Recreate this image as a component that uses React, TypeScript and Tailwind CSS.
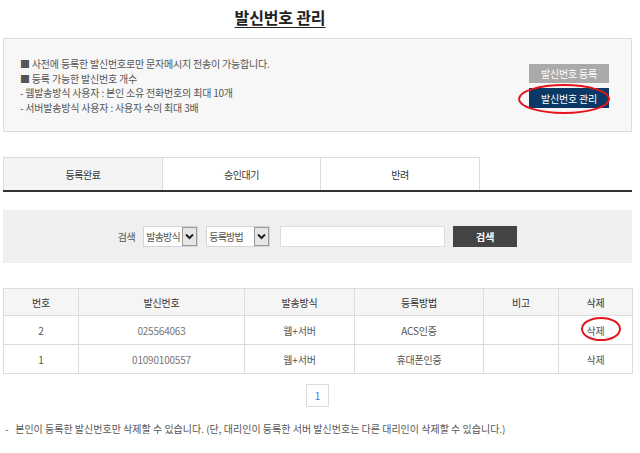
import React from "react";

const font = { fontFamily: '"Noto Sans CJK KR", "Noto Sans", sans-serif' };

function Chevron() {
  return (
    <svg width="9" height="7" viewBox="0 0 9 7">
      <path d="M1 1.5 L4.5 5 L8 1.5" fill="none" stroke="#222" strokeWidth="2" />
    </svg>
  );
}

function FakeSelect({ label, width }: { label: string; width: string }) {
  return (
    <div className={`flex h-[21px] ${width} items-stretch border border-[#d5d5d5] bg-white`}>
      <span className="flex flex-1 items-center overflow-hidden whitespace-nowrap pl-[2px] text-[10px] tracking-[-0.08em] text-[#555]">
        {label}
      </span>
      <span className="flex w-[15px] shrink-0 items-center justify-center border border-[#9a9a9a] bg-[#e6e6e6]">
        <Chevron />
      </span>
    </div>
  );
}

const rows = [
  { no: "2", num: "025564063", how: "웹+서버", reg: "ACS인증", circled: true },
  { no: "1", num: "01090100557", how: "웹+서버", reg: "휴대폰인증", circled: false },
];

export default function App() {
  return (
    <div className="h-[453px] w-[640px] overflow-hidden bg-white text-[#555]" style={font}>
      {/* TITLE */}
      <div className="w-[560px] pt-[5px] text-center">
        <span className="text-[16px] font-bold tracking-[-0.01em] text-[#222] underline underline-offset-[3px]">
          발신번호 관리
        </span>
      </div>

      {/* INFO BOX */}
      <div className="mx-[3px] mt-[9px] flex h-[94px] w-[629px] justify-between border border-[#dcdcdc] bg-[#f7f7f7]">
        <div className="pl-[16px] pt-[18px] text-[10px] leading-[14.7px] tracking-[-0.02em] text-[#555]">
          <p>■ 사전에 등록한 발신번호로만 문자메시지 전송이 가능합니다.</p>
          <p>■ 등록 가능한 발신번호 개수</p>
          <p>- 웹발송방식 사용자 : 본인 소유 전화번호의 최대 10개</p>
          <p>- 서버발송방식 사용자 : 사용자 수의 최대 3배</p>
        </div>
        <div className="mr-[22px] mt-[25px] flex w-[80px] flex-col gap-[5px]">
          <div className="flex h-[19px] items-center justify-center bg-[#aaaaaa] text-[10px] tracking-[-0.02em] text-white">
            발신번호 등록
          </div>
          <div className="relative flex h-[20px] items-center justify-center bg-[#0b3966] text-[10px] tracking-[-0.02em] text-white">
            발신번호 관리
            <svg className="absolute left-[-12px] top-[-5px]" width="94" height="32" viewBox="0 0 94 32">
              <ellipse cx="47" cy="16" rx="45" ry="14" fill="none" stroke="#e3141c" strokeWidth="2" />
            </svg>
          </div>
        </div>
      </div>

      {/* TABS */}
      <div className="mx-[3px] mt-[25px] flex w-[629px] border-b-2 border-[#333]">
        <div className="flex h-[33px] w-[159px] items-center justify-center border-l border-t border-[#dcdcdc] bg-[#f4f4f4] text-[10px] tracking-[-0.04em] text-[#333]">
          등록완료
        </div>
        <div className="flex h-[33px] w-[158px] items-center justify-center border-l border-t border-[#dcdcdc] text-[10px] tracking-[-0.04em] text-[#333]">
          승인대기
        </div>
        <div className="flex h-[33px] w-[160px] items-center justify-center border-x border-t border-[#dcdcdc] text-[10px] tracking-[-0.04em] text-[#333]">
          반려
        </div>
      </div>

      {/* SEARCH */}
      <div className="mx-[3px] mt-[18px] flex h-[53px] w-[629px] items-center justify-center bg-[#efefef]">
        <span className="mr-[8px] text-[10px] tracking-[-0.04em] text-[#555]">검색</span>
        <FakeSelect label="발송방식" width="w-[55px]" />
        <div className="w-[8px]" />
        <FakeSelect label="등록방법" width="w-[64px]" />
        <div className="ml-[10px] h-[21px] w-[165px] border border-[#dcdcdc] bg-white" />
        <div className="ml-[8px] flex h-[21px] w-[64px] items-center justify-center bg-[#444] text-[10px] font-bold text-white">
          검색
        </div>
      </div>

      {/* TABLE */}
      <table className="mx-[3px] mt-[25px] w-[629px] table-fixed border-collapse text-center text-[10px] tracking-[-0.02em]">
        <colgroup>
          <col className="w-[75px]" />
          <col className="w-[166px]" />
          <col className="w-[110px]" />
          <col className="w-[129px]" />
          <col className="w-[75px]" />
          <col className="w-[74px]" />
        </colgroup>
        <thead>
          <tr className="h-[27px] bg-[#f5f5f5] text-[#333]">
            <th className="border border-[#dcdcdc] font-normal">번호</th>
            <th className="border border-[#dcdcdc] font-normal">발신번호</th>
            <th className="border border-[#dcdcdc] font-normal">발송방식</th>
            <th className="border border-[#dcdcdc] font-normal">등록방법</th>
            <th className="border border-[#dcdcdc] font-normal">비고</th>
            <th className="border border-[#dcdcdc] font-normal">삭제</th>
          </tr>
        </thead>
        <tbody>
          {rows.map((r) => (
            <tr key={r.no} className="h-[29px] text-[#555]">
              <td className="border border-[#dcdcdc]">{r.no}</td>
              <td className="border border-[#dcdcdc] text-[#777]">{r.num}</td>
              <td className="border border-[#dcdcdc]">{r.how}</td>
              <td className="border border-[#dcdcdc]">{r.reg}</td>
              <td className="border border-[#dcdcdc]"></td>
              <td className="border border-[#dcdcdc]">
                <span className="relative">
                  삭제
                  {r.circled && (
                    <svg className="absolute left-[-7px] top-[-7px]" width="42" height="26" viewBox="0 0 42 26">
                      <ellipse cx="21" cy="13" rx="19" ry="11" fill="none" stroke="#e3141c" strokeWidth="2" />
                    </svg>
                  )}
                </span>
              </td>
            </tr>
          ))}
        </tbody>
      </table>

      {/* PAGINATION */}
      <div className="mx-[3px] mt-[10px] flex w-[629px] justify-center">
        <div className="flex h-[23px] w-[23px] items-center justify-center border border-[#dcdcdc] text-[10px] text-[#4a7fd0]">
          1
        </div>
      </div>

      {/* NOTE */}
      <p className="mt-[14px] pl-[5px] text-[10px] text-[#555]">
        -&nbsp;&nbsp; 본인이 등록한 발신번호만 삭제할 수 있습니다. (단, 대리인이 등록한 서버 발신번호는 다른 대리인이 삭제할 수 있습니다.)
      </p>
    </div>
  );
}
